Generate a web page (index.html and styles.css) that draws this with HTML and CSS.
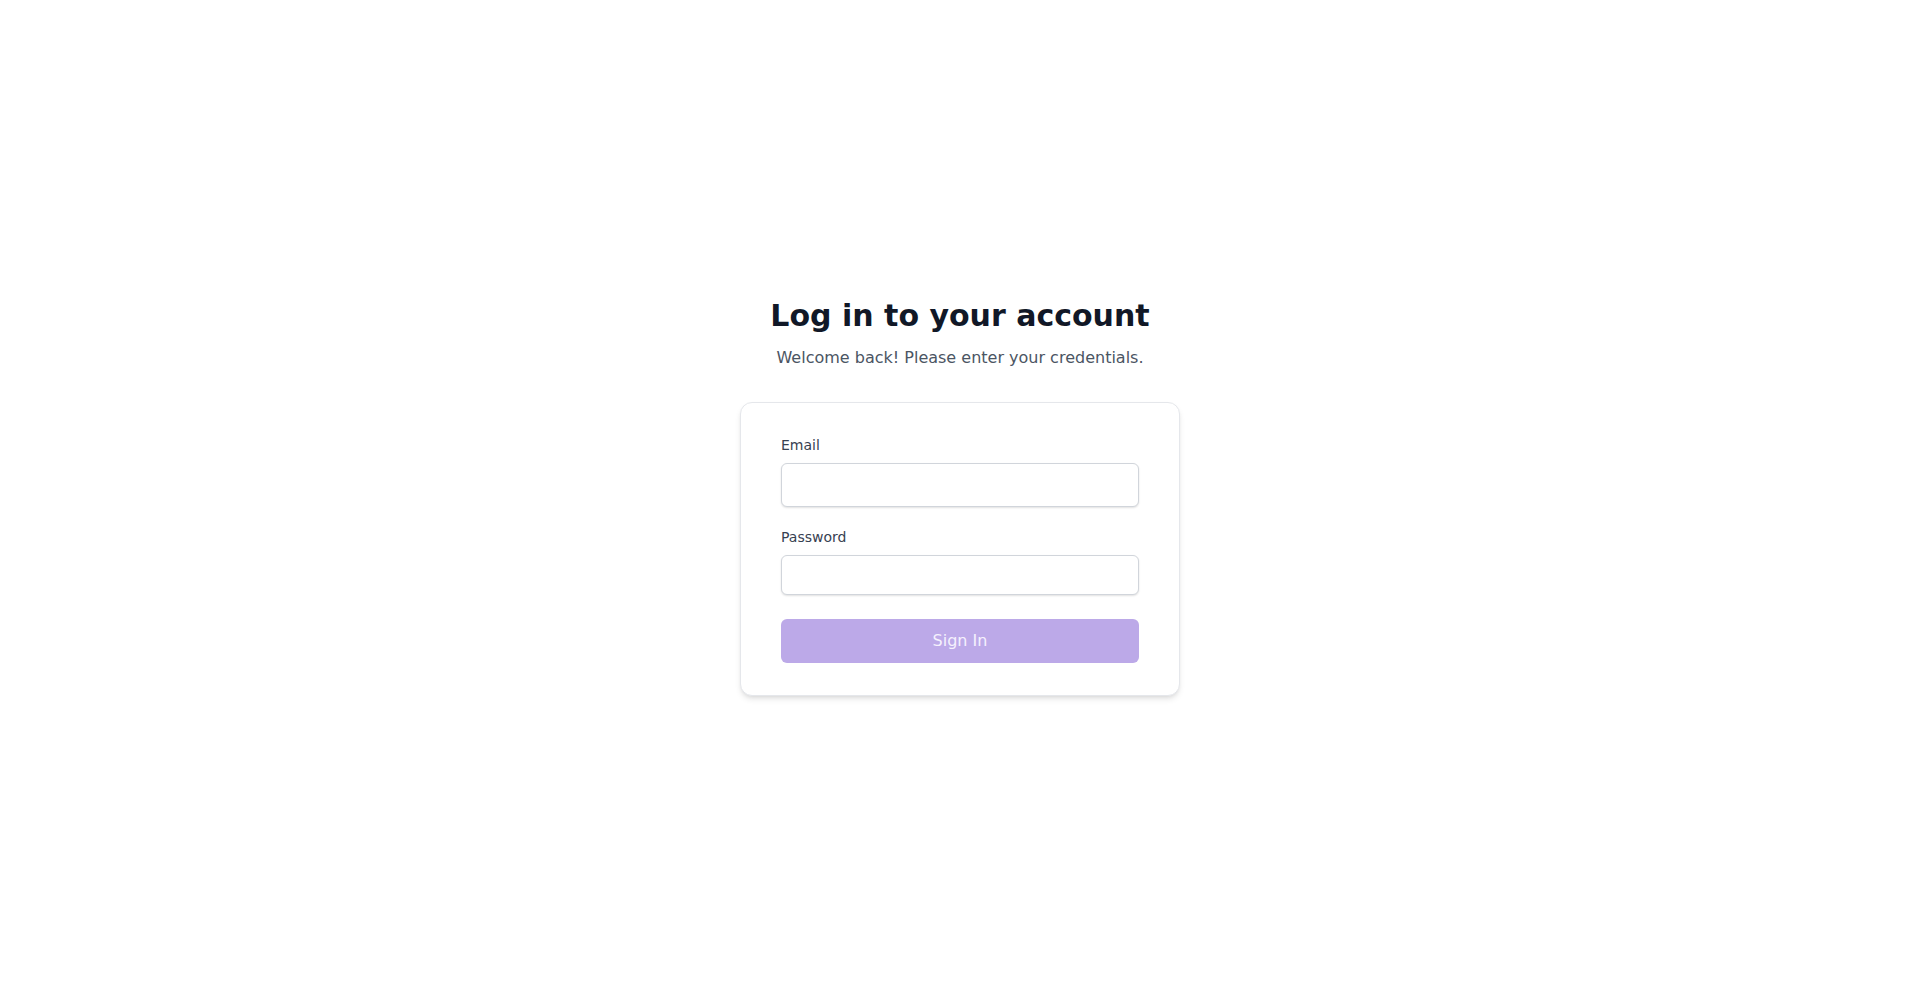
FILE: index.html
```html
<!DOCTYPE html>
<html lang="en">

<head>
    <meta charset="UTF-8">
    <meta name="viewport" content="width=device-width, initial-scale=1">
    <title>Log in</title>
    <link rel="stylesheet" href="styles.css">
</head>

<body>
    <main class="page">
        <div class="login">
            <h1>Log in to your account</h1>
            <p class="subtitle">Welcome back! Please enter your credentials.</p>

            <form class="card">
                <label class="field">
                    <span class="field-label">Email</span>
                    <input type="email" class="input input-email">
                </label>
                <label class="field">
                    <span class="field-label">Password</span>
                    <input type="password" class="input">
                </label>
                <button type="submit" class="btn" disabled>Sign In</button>
            </form>
        </div>
    </main>
</body>

</html>
```

FILE: styles.css
```css
* {
    box-sizing: border-box;
}

html, body {
    margin: 0;
    height: 100%;
}

body {
    font-family: 'DejaVu Sans', 'Noto Sans', sans-serif;
    background: #fff;
    color: #111827;
}

.page {
    min-height: 100%;
    display: flex;
    align-items: center;
    justify-content: center;
}

.login {
    width: 440px;
    display: flex;
    flex-direction: column;
    align-items: center;
}

h1 {
    margin: 0;
    font-size: 30px;
    line-height: 36px;
    font-weight: 700;
    color: #111827;
}

.subtitle {
    margin: 12px 0 0;
    font-size: 16px;
    line-height: 24px;
    color: #4b5563;
}

.card {
    width: 100%;
    margin-top: 32px;
    padding: 32px 40px;
    background: #fff;
    border: 1px solid #e5e7eb;
    border-radius: 12px;
    box-shadow: 0 4px 6px -1px #0000001a, 0 2px 4px -2px #0000001a;
    display: flex;
    flex-direction: column;
}

.field {
    display: flex;
    flex-direction: column;
    gap: 8px;
    margin-bottom: 20px;
}

.field-label {
    font-size: 14px;
    line-height: 20px;
    color: #374151;
}

.input {
    height: 40px;
    padding: 8px 12px;
    font-size: 14px;
    font-family: inherit;
    border: 1px solid #d1d5db;
    border-radius: 6px;
    box-shadow: 0 1px 2px #0000001f;
    background: #fff;
}

.input-email {
    height: 44px;
}

.btn {
    margin-top: 4px;
    height: 44px;
    border: none;
    border-radius: 6px;
    background: #bca9e8;
    color: #f5f1fd;
    font-family: inherit;
    font-size: 16px;
}
```
